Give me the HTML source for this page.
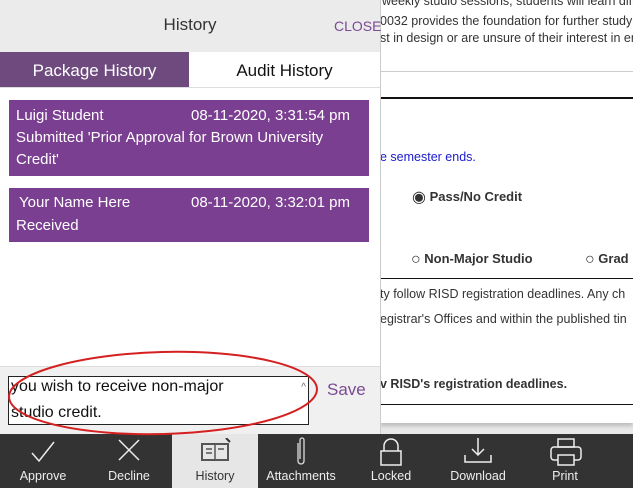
<!DOCTYPE html>
<html><head><style>
body{margin:0;width:633px;height:488px;overflow:hidden;position:relative;font-family:"Liberation Sans",sans-serif;background:#e9e9e9}
.a{position:absolute}
.doc{left:380px;top:0;width:253px;height:423px;background:#fff;box-shadow:0 3px 4px #bbb;color:#333;font-size:12.5px;overflow:hidden}
.doc .a{white-space:nowrap}
.pan{left:0;top:0;width:380px;height:434px;background:#fff;border-right:1px solid #ccc}
.card{left:9px;width:360px;background:#7b3f91;color:#fff;font-size:15px;line-height:22px}
.tb{top:434px;height:54px;width:86px;text-align:center;color:#eee;font-size:12.5px}
.tb span{position:absolute;left:0;right:0;top:35px}
.r{font-size:16px;font-weight:normal;vertical-align:-1px}
</style></head><body>
<div class="a doc">
<div class="a" style="left:2px;top:-6px">weekly studio sessions, students will learn diff</div>
<div class="a" style="left:0;top:14px">0032 provides the foundation for further study i</div>
<div class="a" style="left:0;top:31px">st in design or are unsure of their interest in en</div>
<div class="a" style="left:0;top:71px;width:253px;border-top:1px solid #ccc"></div>
<div class="a" style="left:0;top:97px;width:253px;border-top:2px solid #111"></div>
<div class="a" style="left:0;top:150px;color:#1a1acc">e semester ends.</div>
<div class="a" style="left:32px;top:187px;font-weight:bold;font-size:13px"><span class="r">◉</span> Pass/No Credit</div>
<div class="a" style="left:31px;top:251px;font-weight:bold;font-size:13px"><span class="r">○</span> Non-Major Studio</div>
<div class="a" style="left:205px;top:251px;font-weight:bold;font-size:13px"><span class="r">○</span> Grad</div>
<div class="a" style="left:0;top:278px;width:253px;border-top:1px solid #111"></div>
<div class="a" style="left:0;top:287px">ty follow RISD registration deadlines. Any ch</div>
<div class="a" style="left:0;top:312px">egistrar's Offices and within the published tin</div>
<div class="a" style="left:0;top:377px;font-weight:bold">v RISD's registration deadlines.</div>
<div class="a" style="left:0;top:404px;width:253px;border-top:1px solid #111"></div>
</div>
<div class="a pan">
<div class="a" style="left:0;top:0;width:380px;height:52px;background:#ebebeb"></div>
<div class="a" style="left:0;top:15px;width:380px;text-align:center;font-size:17px;color:#333">History</div>
<div class="a" style="left:334px;top:18px;font-size:14px;color:#7a4a92">CLOSE</div>
<div class="a" style="left:0;top:52px;width:189px;height:35px;background:#6e4a7f;color:#fff;font-size:17px;text-align:center;line-height:37px">Package History</div>
<div class="a" style="left:189px;top:52px;width:191px;height:35px;color:#111;font-size:17px;text-align:center;line-height:37px">Audit History</div>
<div class="a" style="left:0;top:87px;width:380px;border-top:1px solid #ddd"></div>
<div class="a card" style="top:100px;height:76px"><div class="a" style="left:7px;top:5px">Luigi Student</div><div class="a" style="left:182px;top:5px">08-11-2020, 3:31:54 pm</div><div class="a" style="left:7px;top:27px;width:340px">Submitted 'Prior Approval for Brown University Credit'</div></div>
<div class="a card" style="top:188px;height:54px"><div class="a" style="left:10px;top:4px">Your Name Here</div><div class="a" style="left:182px;top:4px">08-11-2020, 3:32:01 pm</div><div class="a" style="left:7px;top:27px">Received</div></div>
<div class="a" style="left:0;top:366px;width:380px;height:68px;background:#f0f0f0;border-top:1px solid #ddd"></div>
<div class="a" style="left:8px;top:376px;width:299px;height:47px;background:#fff;border:1px solid #222;font-size:16px;line-height:26px;color:#111"><div style="padding-left:2px;margin-top:-3px">you wish to receive non-major<br>studio credit.</div><div class="a" style="right:2px;top:-2px;font-size:10px;color:#666">^</div></div>
<div class="a" style="left:327px;top:380px;font-size:17px;color:#7a4a92">Save</div>
</div>
<div class="a" style="left:0;top:434px;width:633px;height:54px;background:#333"></div>
<div class="a" style="left:172px;top:434px;width:86px;height:54px;background:#e6e6e6"></div>
<div class="a tb" style="left:0"><svg class="a" style="left:30px;top:6px" width="26" height="24"><path d="M2 13 L9 21 L24 2" stroke="#eee" stroke-width="1.5" fill="none"/></svg><span>Approve</span></div>
<div class="a tb" style="left:86px"><svg class="a" style="left:31px;top:4px" width="24" height="24"><path d="M2 2L22 22M22 2L2 22" stroke="#eee" stroke-width="1.5"/></svg><span>Decline</span></div>
<div class="a tb" style="left:172px;color:#333"><svg class="a" style="left:28px;top:4px" width="32" height="26"><rect x="2" y="6" width="26" height="16" fill="none" stroke="#555" stroke-width="2"/><path d="M15 6V22M6 11h6M6 15h6M18 11h6" stroke="#555" stroke-width="1.5"/><path d="M26 0L30 4" stroke="#333" stroke-width="2"/></svg><span>History</span></div>
<div class="a tb" style="left:258px"><svg class="a" style="left:36px;top:1px" width="14" height="32"><path d="M4 8V26a3 3 0 0 0 6 0V5a2 2 0 0 0-4 0V24" stroke="#ddd" stroke-width="1.3" fill="none"/></svg><span>Attachments</span></div>
<div class="a tb" style="left:348px"><svg class="a" style="left:31px;top:4px" width="24" height="30"><path d="M5 13V8a7 7 0 0 1 14 0V13" stroke="#eee" stroke-width="1.5" fill="none"/><rect x="2" y="13" width="20" height="14" fill="none" stroke="#eee" stroke-width="1.5"/></svg><span>Locked</span></div>
<div class="a tb" style="left:435px"><svg class="a" style="left:28px;top:3px" width="30" height="28"><path d="M15 1V18M9 12l6 6 6-6M2 18v7h26v-7" stroke="#eee" stroke-width="1.5" fill="none"/></svg><span>Download</span></div>
<div class="a tb" style="left:522px"><svg class="a" style="left:27px;top:3px" width="34" height="30"><rect x="9" y="2" width="16" height="8" fill="none" stroke="#eee" stroke-width="1.5"/><rect x="2" y="10" width="30" height="13" rx="3" fill="none" stroke="#eee" stroke-width="1.5"/><rect x="9" y="18" width="16" height="10" fill="#333" stroke="#eee" stroke-width="1.5"/></svg><span>Print</span></div>
<svg class="a" style="left:0;top:0" width="633" height="488"><ellipse cx="163" cy="393" rx="154" ry="41" fill="none" stroke="#d42020" stroke-width="2" transform="rotate(-1.5 163 393)"/></svg>
</body></html>
